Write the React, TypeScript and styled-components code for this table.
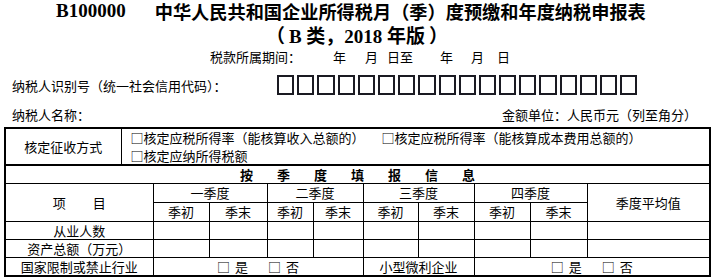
import React from 'react';
import styled, { createGlobalStyle } from 'styled-components';

const GlobalStyle = createGlobalStyle`
  html, body {
    background: #fff;
    margin: 0;
    padding: 0;
  }

  body {
    color: #000;
    font-family: "Noto Sans CJK SC", "Noto Sans", sans-serif;
    font-size: 13px;
  }
`;

const Page = styled.div`
  display: flex;
  flex-direction: column;
  height: 278px;
  overflow: hidden;
  width: 714px;
`;

const Title = styled.h1`
  align-items: center;
  display: flex;
  font-family: "Liberation Serif", "Noto Sans CJK SC", serif;
  font-size: 18.2px;
  font-weight: bold;
  height: 21px;
  margin: 0;
  padding-left: 56px;
  white-space: nowrap;
`;

const FormCode = styled.span`
  font-size: 19px;
  margin-right: 29px;
`;

const Subtitle = styled.div`
  align-items: center;
  display: flex;
  font-family: "Liberation Serif", "Noto Sans CJK SC", serif;
  font-size: 19px;
  font-weight: bold;
  gap: 4px;
  height: 26px;
  justify-content: center;
`;

const Period = styled.div`
  align-items: center;
  display: flex;
  height: 19px;
  padding-left: 210px;
  white-space: nowrap;
`;

const Field = styled.span<{ $gap: number }>`
  margin-left: ${p => p.$gap}px;
`;

const IdRow = styled.div`
  align-items: center;
  display: flex;
  height: 38px;
  padding-left: 12px;
`;

const IdLabel = styled.span`
  width: 265px;
`;

const Boxes = styled.div`
  display: flex;
  gap: 3px;
`;

const Box = styled.span`
  border: 2px solid #1a1a22;
  box-sizing: border-box;
  height: 20px;
  width: 17.2px;
`;

const NameRow = styled.div`
  align-items: center;
  display: flex;
  height: 20px;
  justify-content: space-between;
  padding: 0 17px 0 12px;
`;

const Table = styled.table`
  border: 2px solid #000;
  border-collapse: collapse;
  margin: 3px 0 0 4px;
  table-layout: fixed;
  width: 705px;
`;

const Row = styled.tr<{ $h: number }>`
  height: ${p => p.$h}px;
`;

const Cell = styled.td<{ $thick?: boolean }>`
  border: 1px solid #000;
  border-bottom-width: ${p => (p.$thick ? 2 : 1)}px;
  line-height: 15px;
  padding: 0;
  text-align: center;
  vertical-align: middle;
  white-space: nowrap;
`;

const OptionsCell = styled(Cell)`
  padding: 0 0 0 9px;
  text-align: left;
`;

const Options = styled.div`
  display: flex;
  flex-wrap: wrap;
  line-height: 17.5px;
`;

const Option = styled.span<{ $w?: number }>`
  width: ${p => (p.$w ? `${p.$w}px` : 'auto')};
`;

const Banner = styled(Cell)`
  font-weight: bold;
  letter-spacing: 24px;
  padding-left: 24px;
`;

const Spaced = styled.span<{ $ls: number }>`
  letter-spacing: ${p => p.$ls}px;
  padding-left: ${p => p.$ls}px;
`;

const Choices = styled.span`
  display: inline-flex;
  gap: 20px;
`;

const Choice = styled.span`
  display: inline-flex;
  gap: 5px;
`;

const widths = [116, 32, 56, 58, 46, 50, 55, 56, 56, 57, 123];
const quarters = ['一季度', '二季度', '三季度', '四季度'];

const YesNo: React.FC = () => (
  <Choices>
    <Choice>
      <span>□</span>
      <span>是</span>
    </Choice>
    <Choice>
      <span>□</span>
      <span>否</span>
    </Choice>
  </Choices>
);

const DataRow: React.FC<{ label: string }> = ({ label }) => (
  <Row $h={18}>
    <Cell colSpan={2}>{label}</Cell>
    {Array.from({ length: 9 }, (_, i) => (
      <Cell key={i} />
    ))}
  </Row>
);

export default function App() {
  return (
    <Page>
      <GlobalStyle />
      <Title>
        <FormCode>B100000</FormCode>
        中华人民共和国企业所得税月（季）度预缴和年度纳税申报表
      </Title>
      <Subtitle>
        <span>（</span>
        <span>B 类，2018 年版</span>
        <span>）</span>
      </Subtitle>
      <Period>
        税款所属期间：
        <Field $gap={32}>年</Field>
        <Field $gap={19}>月</Field>
        <Field $gap={9}>日至</Field>
        <Field $gap={27}>年</Field>
        <Field $gap={18}>月</Field>
        <Field $gap={13}>日</Field>
      </Period>
      <IdRow>
        <IdLabel>纳税人识别号（统一社会信用代码）：</IdLabel>
        <Boxes>
          {Array.from({ length: 18 }, (_, i) => (
            <Box key={i} />
          ))}
        </Boxes>
      </IdRow>
      <NameRow>
        <span>纳税人名称：</span>
        <span>金额单位：人民币元（列至角分）</span>
      </NameRow>
      <Table>
        <colgroup>
          {widths.map((w, i) => (
            <col key={i} style={{ width: w }} />
          ))}
        </colgroup>
        <tbody>
          <Row $h={36}>
            <Cell $thick>核定征收方式</Cell>
            <OptionsCell $thick colSpan={10}>
              <Options>
                <Option $w={251}>□核定应税所得率（能核算收入总额的）</Option>
                <Option>□核定应税所得率（能核算成本费用总额的）</Option>
                <Option $w={400}>□核定应纳所得税额</Option>
              </Options>
            </OptionsCell>
          </Row>
          <Row $h={18}>
            <Banner colSpan={11}>按季度填报信息</Banner>
          </Row>
          <Row $h={19}>
            <Cell colSpan={2} rowSpan={2}>
              <Spaced $ls={27}>项目</Spaced>
            </Cell>
            {quarters.map(q => (
              <Cell key={q} colSpan={2}>
                {q}
              </Cell>
            ))}
            <Cell rowSpan={2}>季度平均值</Cell>
          </Row>
          <Row $h={19}>
            {quarters.map(q => (
              <React.Fragment key={q}>
                <Cell>季初</Cell>
                <Cell>季末</Cell>
              </React.Fragment>
            ))}
          </Row>
          <DataRow label="从业人数" />
          <DataRow label="资产总额（万元）" />
          <Row $h={19}>
            <Cell colSpan={2}>国家限制或禁止行业</Cell>
            <Cell colSpan={4}>
              <YesNo />
            </Cell>
            <Cell colSpan={2}>小型微利企业</Cell>
            <Cell colSpan={3}>
              <YesNo />
            </Cell>
          </Row>
        </tbody>
      </Table>
    </Page>
  );
}
